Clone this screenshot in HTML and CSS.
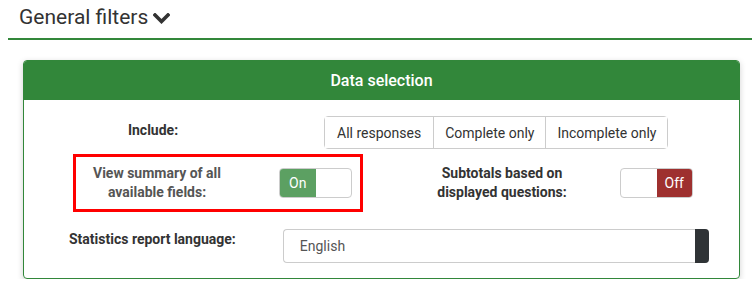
FILE: index.html
```html
<!DOCTYPE html>
<html lang="en">
<head>
    <meta charset="UTF-8">
    <title>Statistics - General filters</title>
    <link rel="stylesheet" href="styles.css">
</head>
<body>
    <!-- Cabeçalho da seção -->
    <div class="section-header">
        <h3>General filters
            <svg class="chevron" width="17" height="11" viewBox="0 0 17 11">
                <polyline points="2,2 8.5,8.5 15,2" fill="none" stroke="#333" stroke-width="3.6" stroke-linecap="square"/>
            </svg>
        </h3>
    </div>

    <div class="panel">
        <div class="panel-heading">Data selection</div>
        <div class="panel-body">
            <div class="row row-include">
                <label class="col-label">Include:</label>
                <div class="btn-group">
                    <button class="btn">All responses</button>
                    <button class="btn">Complete only</button>
                    <button class="btn">Incomplete only</button>
                </div>
            </div>

            <div class="row row-toggles">
                <div class="toggle-field highlighted">
                    <label class="toggle-label">View summary of all available fields:</label>
                    <div class="switch switch-on">
                        <span class="switch-state">On</span>
                        <span class="switch-blank"></span>
                    </div>
                </div>
                <div class="toggle-field">
                    <label class="toggle-label">Subtotals based on displayed questions:</label>
                    <div class="switch switch-off">
                        <span class="switch-blank"></span>
                        <span class="switch-state">Off</span>
                    </div>
                </div>
            </div>

            <div class="row row-lang">
                <label class="col-label lang-label">Statistics report language:</label>
                <div class="select">
                    <span class="select-value">English</span>
                    <span class="select-handle"></span>
                </div>
            </div>
        </div>
    </div>
</body>
</html>
```

FILE: styles.css
```css
:root {
    --green: #32873a;
    --text: #333;
    --border: #ccc;
}

body {
    margin: 0;
    background-color: #fff;
    font-family: 'Roboto', 'Liberation Sans', sans-serif;
    font-size: 14px;
    color: var(--text);
}

/* Cabeçalho */
.section-header {
    margin-left: 8px;
    padding: 4px 0 0 11px;
    height: 40px;
    box-sizing: border-box;
    border-bottom: 2px solid var(--green);
}

.section-header h3 {
    margin: 0;
    font-size: 21px;
    font-weight: 400;
    line-height: 26px;
    display: flex;
    align-items: center;
}

.chevron {
    margin-left: 5px;
    margin-top: 2px;
}

/* Painel */
.panel {
    margin: 20px 12px 0 23px;
    border: 1px solid var(--green);
    border-radius: 4px;
    box-shadow: 0 2px 6px rgba(0, 0, 0, 0.18);
    overflow: hidden;
}

.panel-heading {
    background-color: var(--green);
    color: #fff;
    height: 39px;
    line-height: 39px;
    text-align: center;
    font-size: 16px;
    font-weight: 500;
}

.panel-body {
    padding: 16px 0 15px 0;
}

.row {
    display: flex;
}

.col-label {
    font-weight: 700;
    text-align: center;
}

/* Linha "Include" */
.row-include .col-label {
    width: 230px;
    margin-left: 14px;
    padding-top: 6px;
}

.btn-group {
    display: flex;
    margin-left: 56px;
    border: 1px solid var(--border);
    border-radius: 4px;
}

.btn {
    font-family: inherit;
    font-size: 14px;
    color: var(--text);
    background: #fff;
    border: none;
    border-left: 1px solid var(--border);
    height: 31px;
    padding: 0 11px;
}

.btn:first-child {
    border-left: none;
    padding: 0 12px;
}

/* Linha dos interruptores */
.row-toggles {
    margin-top: 5px;
}

.toggle-field {
    display: flex;
    align-items: center;
    height: 58px;
    box-sizing: border-box;
    border: 3px solid transparent;
}

.toggle-field.highlighted {
    margin-left: 49px;
    width: 290px;
    border-color: #f00;
}

.toggle-field + .toggle-field {
    margin-left: 61px;
}

.toggle-label {
    font-weight: 700;
    text-align: center;
    line-height: 19px;
    width: 150px;
}

.highlighted .toggle-label {
    color: #555;
    margin-left: 6px;
}

.switch {
    display: flex;
    width: 73px;
    height: 30px;
    box-sizing: border-box;
    border: 1px solid var(--border);
    border-radius: 4px;
    overflow: hidden;
    margin-left: 47px;
}

.toggle-field + .toggle-field .switch {
    margin-left: 43px;
}

.switch span {
    flex: 1;
}

.switch-state {
    color: #fff;
    text-align: center;
    line-height: 28px;
}

.switch-on .switch-state {
    background-color: #5ca062;
}

.switch-off .switch-state {
    background-color: #9e302f;
}

/* Linha do idioma */
.row-lang {
    margin-top: 17px;
}

.lang-label {
    margin-left: 45px;
    padding-top: 2px;
}

.select {
    display: flex;
    align-items: center;
    margin-left: 47px;
    width: 426px;
    height: 34px;
    box-sizing: border-box;
    border: 1px solid var(--border);
    border-right: none;
    border-radius: 4px;
}

.select-value {
    flex: 1;
    padding-left: 16px;
    color: #555;
}

.select-handle {
    width: 14px;
    height: 34px;
    background-color: #2f3336;
    border-radius: 0 4px 4px 0;
}
```
